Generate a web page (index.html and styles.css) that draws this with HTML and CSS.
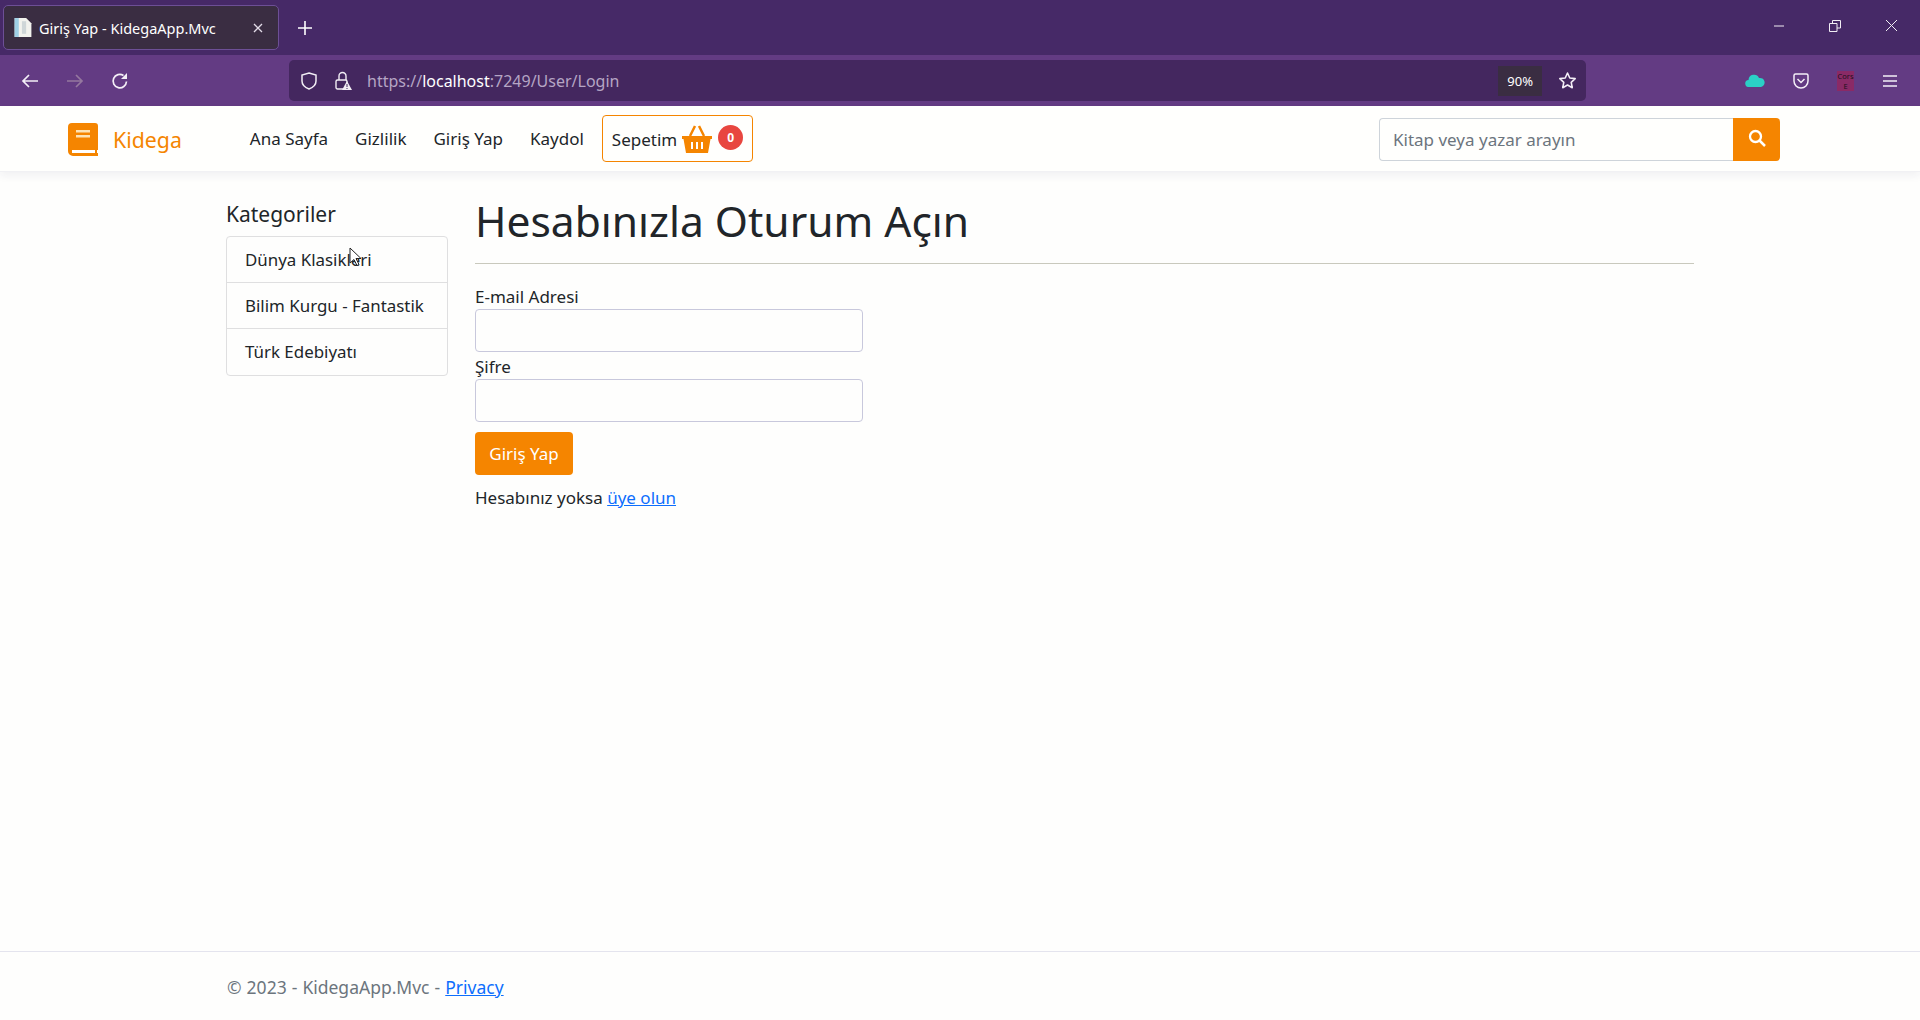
FILE: index.html
```html
<!DOCTYPE html>
<html lang="tr">
<head>
	<meta charset="utf-8">
	<title>Giriş Yap - KidegaApp.Mvc</title>
	<link rel="stylesheet" href="styles.css">
</head>
<body>
	<header class="browser">
		<div class="tabstrip">
			<div class="tab">
				<svg class="tab-icon" width="20" height="21" viewBox="0 0 18 20"><path d="M1 1h11l5 5v13H1z" fill="#f2f2ee"/><path d="M1 1h4v18H1z" fill="#9fd0e6"/><path d="M8 4h4v12H8z" fill="#cfd6d8"/></svg>
				<span class="tab-title">Giriş Yap - KidegaApp.Mvc</span>
				<svg class="tab-close" width="12" height="12" viewBox="0 0 12 12"><path d="M2 2l8 8M10 2l-8 8" stroke="#e3dce8" stroke-width="1.3"/></svg>
			</div>
			<svg class="new-tab" width="16" height="16" viewBox="0 0 16 16"><path d="M8 1v14M1 8h14" stroke="#fff" stroke-width="1.6"/></svg>
			<div class="win-buttons">
				<svg width="12" height="12" viewBox="0 0 12 12"><path d="M1 6h10" stroke="#f1edf4"/></svg>
				<svg width="12" height="12" viewBox="0 0 12 12"><path d="M.5 3.5h7.5v8H.5zM3.5 3V.5h8V8H8" fill="none" stroke="#f1edf4"/></svg>
				<svg width="13" height="13" viewBox="0 0 13 13"><path d="M1 1l11 11M12 1L1 12" stroke="#f1edf4"/></svg>
			</div>
		</div>
		<div class="toolbar">
			<div class="nav-buttons">
				<svg width="18" height="16" viewBox="0 0 18 16"><path d="M17 8H2M8 2L2 8l6 6" fill="none" stroke="#f4eff7" stroke-width="1.7"/></svg>
				<svg width="18" height="16" viewBox="0 0 18 16"><path d="M1 8h15M10 2l6 6-6 6" fill="none" stroke="#95789f" stroke-width="1.7"/></svg>
				<svg width="18" height="18" viewBox="0 0 18 18"><path d="M15.5 9.5A6.7 6.7 0 1 1 12.5 3.5" fill="none" stroke="#f4eff7" stroke-width="1.7"/><path d="M16 1v6h-6z" fill="#f4eff7"/></svg>
			</div>
			<div class="urlbar">
				<svg class="url-icon" width="16" height="18" viewBox="0 0 16 18"><path d="M8 1l7 2v6c0 4-3 6.500-7 8-4-1.500-7-4-7-8V3z" fill="none" stroke="#f1edf4" stroke-width="1.5"/></svg>
				<svg class="url-icon" width="17" height="20" viewBox="0 0 17 20"><path d="M4 9V5a3.500 3.500 0 0 1 7 0v4" fill="none" stroke="#f1edf4" stroke-width="1.4"/><rect x="1" y="9" width="11" height="9" rx="1.500" fill="none" stroke="#f1edf4" stroke-width="1.4"/><path d="M12 10l5 9H7z" fill="#f1edf4"/><path d="M12 13v3M12 17v1" stroke="#43265f"/></svg>
				<span class="url-text">https://<b>localhost</b>:7249/User/Login</span>
				<span class="zoom-level">90%</span>
				<svg class="star" width="19" height="19" viewBox="0 0 24 24"><path d="M12 2.500l2.900 6.300 6.800.8-5 4.700 1.300 6.800-6-3.400-6 3.400 1.300-6.800-5-4.700 6.800-.8z" fill="none" stroke="#f4eff7" stroke-width="2" stroke-linejoin="round"/></svg>
			</div>
			<div class="addons">
				<svg width="20" height="13" viewBox="0 0 20 13"><path d="M4 13a3.500 3.500 0 0 1-.5-7A5.500 5.500 0 0 1 14 4a4.500 4.500 0 0 1 2 9z" fill="#2bd0c6"/></svg>
				<svg width="16" height="16" viewBox="0 0 16 16"><path d="M1 2.500A1.500 1.500 0 0 1 2.500 1h11A1.500 1.500 0 0 1 15 2.500V8a7 7 0 0 1-14 0z" fill="none" stroke="#f4eff7" stroke-width="1.500"/><path d="M4.500 6L8 9.500 11.500 6" fill="none" stroke="#f4eff7" stroke-width="1.500"/></svg>
				<span class="cors">Cors<br>E</span>
				<svg width="16" height="14" viewBox="0 0 16 14"><path d="M1 2h14M1 7h14M1 12h14" stroke="#f4eff7" stroke-width="1.500"/></svg>
			</div>
		</div>
	</header>

	<nav class="navbar">
		<a class="brand">
			<svg width="30" height="33" viewBox="0 0 30 33"><path d="M4 0h23a3 3 0 0 1 3 3v24h-1v3h1v3H5a5 5 0 0 1-5-5V4a4 4 0 0 1 4-4z" fill="#f58500"/><path d="M4 27h23v3H4z" fill="#fff"/><path d="M8 7h14v2.500H8zM8 12h14v2.500H8z" fill="#fde3b5"/></svg>
			<span>Kidega</span>
		</a>
		<ul class="nav-links">
			<li>Ana Sayfa</li>
			<li>Gizlilik</li>
			<li>Giriş Yap</li>
			<li>Kaydol</li>
		</ul>
		<a class="cart">
			<span class="cart-label">Sepetim</span>
			<svg width="30" height="28" viewBox="0 0 30 28"><path d="M0 11h30v3h-1.500L26 28H4L1.500 14H0z" fill="#f58500"/><path d="M8 11l5-10M22 11L17 1" stroke="#f58500" stroke-width="2.500"/><path d="M9 17h2v7H9zM14 17h2v7h-2zM19 17h2v7h-2z" fill="#fff"/></svg>
			<span class="badge">0</span>
		</a>
		<form class="search">
			<input type="text" placeholder="Kitap veya yazar arayın">
			<button type="button">
				<svg width="18" height="18" viewBox="0 0 18 18"><circle cx="7.500" cy="7.500" r="5.500" fill="none" stroke="#fff" stroke-width="2.300"/><path d="M11.500 11.500L17 17" stroke="#fff" stroke-width="2.500"/></svg>
			</button>
		</form>
	</nav>

	<main class="page">
		<aside class="sidebar">
			<h5>Kategoriler</h5>
			<ul class="categories">
				<li>Dünya Klasikleri</li>
				<li>Bilim Kurgu - Fantastik</li>
				<li>Türk Edebiyatı</li>
			</ul>
		</aside>
		<section class="content">
			<h1>Hesabınızla Oturum Açın</h1>
			<hr>
			<form class="login">
				<label>E-mail Adresi</label>
				<input type="text">
				<label>Şifre</label>
				<input type="password">
				<button type="button">Giriş Yap</button>
			</form>
			<p class="signup">Hesabınız yoksa <a href="#">üye olun</a></p>
		</section>
	</main>

	<footer class="footer">
		© 2023 - KidegaApp.Mvc - <a href="#">Privacy</a>
	</footer>

	<svg class="cursor" width="13" height="20" viewBox="0 0 13 20"><path d="M1 1v15l4-3.500 3 6 2-1-3-6h5z" fill="#fff" stroke="#222"/></svg>
</body>
</html>
```

FILE: styles.css
```css
* {
	box-sizing: border-box;
}

html, body {
	height: 100%;
}

body {
	margin: 0;
	height: 1020px;
	overflow: hidden;
	display: flex;
	flex-direction: column;
	position: relative;
	background: #fefefd;
	color: #212529;
	font-family: "Noto Sans", "Open Sans", sans-serif;
	font-size: 16px;
}

ul {
	list-style: none;
	margin: 0;
	padding: 0;
}

a {
	color: #0d6efd;
}

/* browser chrome */
.browser {
	flex: none;
	color: #fff;
}

.tabstrip {
	height: 55px;
	background: #462967;
	display: flex;
	align-items: center;
	padding: 0 0 0 3px;
}

.tab {
	flex: none;
	width: 276px;
	height: 45px;
	background: #3a2d42;
	border: 1px solid #6d4f96;
	border-radius: 5px;
	display: flex;
	align-items: center;
	padding: 0 14px 0 9px;
	font-size: 14.500px;
}

.tab-title {
	margin-left: 6px;
	flex: 1;
	white-space: nowrap;
}

.new-tab {
	margin-left: 18px;
}

.win-buttons {
	margin-left: auto;
	display: flex;
	align-items: center;
	gap: 44px;
	padding-right: 22px;
	margin-top: -4px;
}

.toolbar {
	height: 51px;
	background: #633b83;
	display: flex;
	align-items: center;
	padding: 0 22px 0 21px;
}

.nav-buttons {
	display: flex;
	align-items: center;
	gap: 27px;
	width: 268px;
}

.urlbar {
	width: 1297px;
	height: 41px;
	background: #44275f;
	border-radius: 5px;
	display: flex;
	align-items: center;
	padding: 0 9px 0 12px;
	gap: 18px;
}

.url-text {
	color: #b5a5c4;
	font-size: 16px;
	margin-left: -3px;
	flex: 1;
}

.url-text b {
	color: #fff;
	font-weight: 400;
}

.zoom-level {
	background: #3a2d42;
	font-size: 13px;
	padding: 6px 9px;
	margin-right: -2px;
}

.addons {
	margin-left: auto;
	display: flex;
	align-items: center;
	gap: 28px;
}

.cors {
	width: 17px;
	height: 20px;
	background: #8a2a66;
	color: #20101c;
	font-size: 7.500px;
	line-height: 10px;
	text-align: center;
}

/* site navbar */
.navbar {
	flex: none;
	height: 66px;
	background: #fffffd;
	display: flex;
	align-items: center;
	padding: 0 140px 0 68px;
	border-bottom: 1px solid #f1f1f4;
	box-shadow: 0 4px 8px rgba(40, 40, 90, 0.06);
}

.brand {
	display: flex;
	align-items: center;
	color: #f58500;
	font-size: 21.300px;
	gap: 15px;
	margin-top: 2px;
}

.nav-links {
	display: flex;
	gap: 27px;
	margin-left: 68px;
	font-size: 17px;
}

.cart {
	display: flex;
	align-items: center;
	height: 47px;
	width: 151px;
	margin-left: 18px;
	padding: 0 8px 0 9px;
	gap: 5px;
	border: 1px solid #f58500;
	border-radius: 4px;
	color: #212529;
	font-size: 17px;
}

.cart-label {
	margin-top: 1px;
}

.badge {
	width: 25px;
	height: 25px;
	border-radius: 50%;
	background: #e8463f;
	color: #fff;
	font-size: 12px;
	font-weight: 700;
	text-align: center;
	line-height: 25px;
	margin: -3px 0 0 1px;
}

.search {
	margin-left: auto;
	display: flex;
	height: 43px;
	margin-top: 1px;
}

.search input {
	width: 354px;
	border: 1px solid #ced4da;
	border-right: 0;
	border-radius: 4px 0 0 4px;
	padding: 0 13px;
	font: inherit;
	font-size: 17px;
	background: #fffffd;
}

.search input::placeholder {
	color: #6c757d;
}

.search button {
	width: 47px;
	border: 0;
	border-radius: 0 4px 4px 0;
	background: #f58500;
	padding: 0;
}

/* page */
.page {
	flex: 1;
	display: grid;
	grid-template-columns: 222px 1219px;
	column-gap: 27px;
	padding: 11px 0 0 226px;
	align-items: start;
}

.sidebar h5 {
	margin: 17px 0 8px;
	font-size: 21px;
	font-weight: 400;
	line-height: 28px;
}

.categories {
	border: 1px solid #dfdfe0;
	border-radius: 4px;
	font-size: 16.900px;
}

.categories li {
	height: 46px;
	line-height: 46px;
	padding-left: 18px;
	white-space: nowrap;
	border-bottom: 1px solid #dfdfe0;
}

.categories li:last-child {
	border-bottom: 0;
}

.content h1 {
	margin: 0;
	padding-top: 8px;
	font-size: 42.500px;
	font-weight: 400;
	line-height: 60px;
}

.content hr {
	margin: 12px 0 0;
	border: 0;
	border-top: 1px solid #c9c9bd;
}

.login {
	display: flex;
	flex-direction: column;
	align-items: flex-start;
	margin-top: 21px;
	font-size: 17px;
}

.login label {
	line-height: 24px;
}

.login input {
	width: 388px;
	height: 43px;
	margin-bottom: 3px;
	border: 1px solid #c8c8dc;
	border-radius: 4px;
	background: #fefefd;
}

.login button {
	width: 98px;
	height: 43px;
	margin-top: 7px;
	border: 0;
	border-radius: 4px;
	background: #f58500;
	color: #fff;
	font: inherit;
}

.signup {
	margin: 11px 0 0;
	font-size: 17px;
	line-height: 24px;
}

.footer {
	flex: none;
	height: 69px;
	border-top: 1px solid #e4e4ee;
	padding: 23px 0 0 227px;
	color: #6c757d;
	font-size: 17.500px;
	word-spacing: 0.500px;
	line-height: 24px;
}

.cursor {
	position: absolute;
	left: 349px;
	top: 247px;
}
```
